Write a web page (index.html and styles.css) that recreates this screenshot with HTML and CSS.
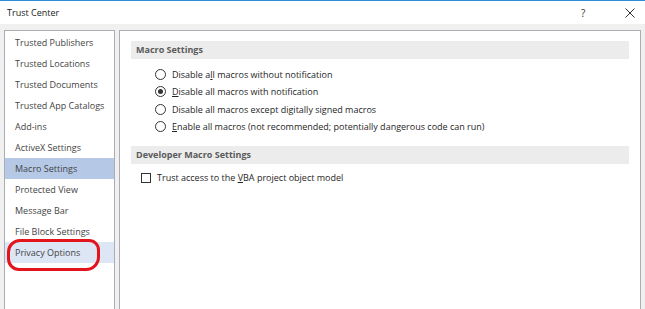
FILE: index.html
```html
<!DOCTYPE html>
<html>
<head>
<meta charset="utf-8">
<link rel="stylesheet" href="styles.css">
</head>
<body>
<div class="window">
  <div class="titlebar">
    <span class="title">Trust Center</span>
    <span class="help">?</span>
    <span class="close">
      <svg width="10" height="10" viewBox="0 0 10 10"><path d="M0.5 0.5 L9.5 9.5 M9.5 0.5 L0.5 9.5" stroke="#333" stroke-width="1" fill="none"/></svg>
    </span>
  </div>
  <div class="content">
    <nav class="sidebar">
      <div class="nav-item">Trusted Publishers</div>
      <div class="nav-item">Trusted Locations</div>
      <div class="nav-item">Trusted Documents</div>
      <div class="nav-item">Trusted App Catalogs</div>
      <div class="nav-item">Add-ins</div>
      <div class="nav-item">ActiveX Settings</div>
      <div class="nav-item selected">Macro Settings</div>
      <div class="nav-item">Protected View</div>
      <div class="nav-item">Message Bar</div>
      <div class="nav-item">File Block Settings</div>
      <div class="nav-item hover">Privacy Options</div>
      <div class="annotation"></div>
    </nav>
    <main class="main">
      <div class="section-head">Macro Settings</div>
      <div class="options">
        <div class="opt"><span class="radio"></span><span>Disable a<u>l</u>l macros without notification</span></div>
        <div class="opt"><span class="radio checked"></span><span><u>D</u>isable all macros with notification</span></div>
        <div class="opt"><span class="radio"></span><span>Disable all macros except di<u>g</u>itally signed macros</span></div>
        <div class="opt"><span class="radio"></span><span><u>E</u>nable all macros (not recommended; potentially dangerous code can run)</span></div>
      </div>
      <div class="section-head">Developer Macro Settings</div>
      <div class="checks">
        <div class="opt"><span class="checkbox"></span><span>Trust access to the <u>V</u>BA project object model</span></div>
      </div>
    </main>
  </div>
</div>
</body>
</html>
```

FILE: styles.css
```css
html, body {
  margin: 0;
  padding: 0;
  background: #f0f0f0;
}
body {
  font-family: "Open Sans", "Noto Sans", sans-serif;
  font-size: 9px;
  color: #262626;
}
.window {
  width: 645px;
  height: 309px;
  overflow: hidden;
}
.titlebar {
  height: 23px;
  border-top: 1px solid #2b8fd8;
  background: #ffffff;
  display: flex;
  align-items: center;
  padding-left: 7px;
  box-sizing: content-box;
}
.title {
  flex: 1;
  color: #1a1a1a;
}
.help {
  width: 10px;
  margin-right: 34px;
  font-size: 10px;
  color: #333;
}
.close {
  width: 10px;
  height: 10px;
  margin-right: 10px;
  display: flex;
}
.content {
  display: flex;
  gap: 4px;
  padding: 6px 4px 0 4px;
  height: 279px;
  background: #f0f0f0;
}
.sidebar {
  position: relative;
  width: 109px;
  background: #ffffff;
  border: 1px solid #abadb3;
  border-bottom: none;
  padding-top: 1px;
}
.nav-item {
  height: 21px;
  line-height: 21px;
  padding-left: 10px;
  color: #444444;
  white-space: nowrap;
}
.nav-item.selected {
  background: #b5c9e7;
}
.nav-item.hover {
  background: #dce6f4;
}
.annotation {
  position: absolute;
  left: 2px;
  top: 208px;
  width: 87px;
  height: 26px;
  border: 3px solid #e3141c;
  border-radius: 13px 11px 14px 12px;
}
.main {
  flex: 1;
  background: #ffffff;
  border: 1px solid #abadb3;
  border-bottom: none;
  padding: 10px 11px 0 11px;
}
.section-head {
  height: 18px;
  line-height: 18px;
  background: #ececec;
  padding-left: 5px;
  font-weight: 700;
  color: #5a5a5a;
}
.options {
  padding: 7px 0 11px 24px;
}
.checks {
  padding: 5px 0 0 10px;
}
.opt {
  height: 17.3px;
  display: flex;
  align-items: center;
  white-space: nowrap;
}
.radio {
  width: 9px;
  height: 9px;
  border: 1px solid #333;
  border-radius: 50%;
  margin-right: 6px;
  display: flex;
  align-items: center;
  justify-content: center;
  flex: none;
}
.radio.checked::after {
  content: "";
  width: 5px;
  height: 5px;
  border-radius: 50%;
  background: #333;
}
.checkbox {
  width: 8px;
  height: 8px;
  border: 1px solid #333;
  margin-right: 6px;
  flex: none;
}
u {
  text-decoration: underline;
  text-underline-offset: 1px;
}
```
